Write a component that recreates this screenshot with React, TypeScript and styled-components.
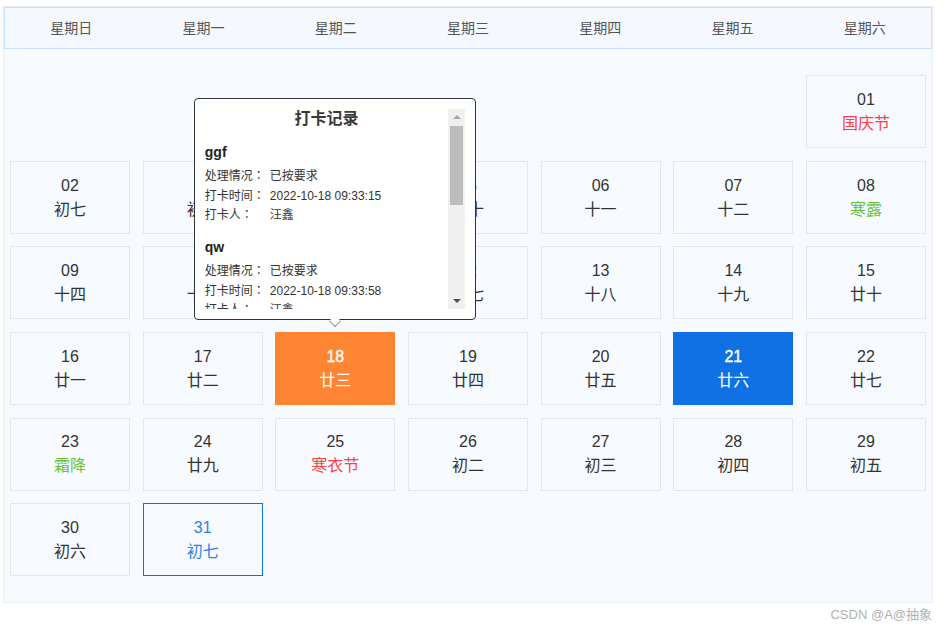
import React from "react";
import styled, { createGlobalStyle } from "styled-components";

const Global = createGlobalStyle`
  html, body { margin: 0; padding: 0; background: #fff; }
  body { font-family: "Liberation Sans", "Noto Sans CJK SC", sans-serif; }
`;

const Page = styled.div`
  width: 947px;
  height: 630px;
  padding: 6px 14px 0 3px;
  box-sizing: border-box;
  overflow: hidden;
`;

const Calendar = styled.div`
  width: 930px;
  height: 597px;
  box-sizing: border-box;
  background: #f7faff;
  border: 1px solid #eceff3;
`;

const WeekHeader = styled.div`
  display: grid;
  grid-template-columns: repeat(7, 1fr);
  height: 42px;
  width: 928px;
  padding-bottom: 2px;
  box-sizing: border-box;
  background: #f5f9ff;
  border: 1px solid #c6e1ff;
`;

const WeekDay = styled.div`
  display: flex;
  align-items: center;
  justify-content: center;
  font-size: 14px;
  color: #555;
`;

const Days = styled.div`
  display: grid;
  grid-template-columns: repeat(7, 132.67px);
  grid-auto-rows: 85.6px;
  padding-top: 20.2px;
`;

const Slot = styled.div<{ $start?: number }>`
  position: relative;
  padding: 6px 0 0 6px;
  box-sizing: border-box;
  ${(p) => (p.$start ? `grid-column-start: ${p.$start};` : "")}
`;

type Tone = "plain" | "today" | "active" | "selected";

const cellBg: Record<Tone, string> = {
  plain: "transparent",
  today: "transparent",
  active: "#1071e5",
  selected: "#ff8533",
};
const cellBorder: Record<Tone, string> = {
  plain: "#e2e7ed",
  today: "#1071e5",
  active: "#1071e5",
  selected: "#ff8533",
};
const cellText: Record<Tone, string> = {
  plain: "#333",
  today: "#2a82e6",
  active: "#fff",
  selected: "#fff",
};

const Cell = styled.div<{ $tone: Tone }>`
  width: 120px;
  height: 73px;
  box-sizing: border-box;
  padding-top: 11.8px;
  text-align: center;
  font-size: 16px;
  line-height: 24px;
  background: ${(p) => cellBg[p.$tone]};
  border: 1px solid ${(p) => cellBorder[p.$tone]};
  color: ${(p) => cellText[p.$tone]};
`;

const Num = styled.div<{ $strong?: boolean }>`
  ${(p) => (p.$strong ? "-webkit-text-stroke: 0.35px currentColor;" : "")}
`;

const Lunar = styled.div<{ $kind?: "fest" | "term" }>`
  color: ${(p) => (p.$kind === "fest" ? "#ff4045" : p.$kind === "term" ? "#67c23a" : "inherit")};
`;

const Popover = styled.div`
  position: absolute;
  z-index: 5;
  left: 66px;
  bottom: calc(100% - 6px + 12px);
  transform: translateX(-50%);
  width: 282px;
  height: 222px;
  box-sizing: border-box;
  padding: 10px 10px 10px 9.5px;
  display: flex;
  background: #fff;
  border: 1px solid #2f3338;
  border-radius: 4px;
`;

const Arrow = styled.span`
  position: absolute;
  left: 50%;
  bottom: -7px;
  width: 9px;
  height: 9px;
  margin-left: -5px;
  background: #fff;
  border-right: 1px solid #777;
  border-bottom: 1px solid #777;
  transform: rotate(45deg) scale(0.85);
`;

const PopBody = styled.div`
  flex: 1;
  min-width: 0;
  overflow: hidden;
  color: #333;
`;

const PopTitle = styled.div`
  font-size: 16px;
  font-weight: 700;
  line-height: 20px;
  text-align: center;
  color: #3a3a3a;
  margin-bottom: 14px;
`;

const Record = styled.div`
  margin-bottom: 12.8px;
`;

const Who = styled.div`
  font-size: 14px;
  font-weight: 700;
  line-height: 18px;
  color: #222;
  margin-bottom: 6.2px;
`;

const Line = styled.div`
  display: flex;
  height: 19.4px;
  font-size: 12px;
  line-height: 19.4px;
`;

const Label = styled.span`
  width: 65px;
  flex: none;
`;

const Colon = styled.span`
  font-family: "Noto Sans CJK TC", sans-serif;
  line-height: 0;
`;

const Track = styled.div`
  width: 17px;
  flex: none;
  height: 200px;
  background: #f0f0f0;
  position: relative;
  display: flex;
  flex-direction: column;
  align-items: center;
`;

const ArrowGlyph = styled.span<{ $up?: boolean }>`
  position: absolute;
  ${(p) => (p.$up ? "top: 6px;" : "bottom: 6px;")}
  left: 50%;
  margin-left: -4px;
  width: 0;
  height: 0;
  border-left: 4px solid transparent;
  border-right: 4px solid transparent;
  ${(p) =>
    p.$up
      ? `border-bottom: 4px solid #a8a8a8;`
      : `border-top: 4px solid #505050;`}
`;

const Thumb = styled.div`
  margin-top: 17px;
  width: 13px;
  height: 79px;
  background: #bdbdbd;
`;

const Watermark = styled.div`
  width: 929px;
  margin-top: 3px;
  text-align: right;
  font-size: 13px;
  line-height: 18px;
  color: #b2b2b2;
`;

type Day = { d: string; l: string; kind?: "fest" | "term"; tone?: Tone };

const days: Day[] = [
  { d: "01", l: "国庆节", kind: "fest" },
  { d: "02", l: "初七" },
  { d: "03", l: "初八" },
  { d: "04", l: "初九" },
  { d: "05", l: "初十" },
  { d: "06", l: "十一" },
  { d: "07", l: "十二" },
  { d: "08", l: "寒露", kind: "term" },
  { d: "09", l: "十四" },
  { d: "10", l: "十五" },
  { d: "11", l: "十六" },
  { d: "12", l: "十七" },
  { d: "13", l: "十八" },
  { d: "14", l: "十九" },
  { d: "15", l: "廿十" },
  { d: "16", l: "廿一" },
  { d: "17", l: "廿二" },
  { d: "18", l: "廿三", tone: "selected" },
  { d: "19", l: "廿四" },
  { d: "20", l: "廿五" },
  { d: "21", l: "廿六", tone: "active" },
  { d: "22", l: "廿七" },
  { d: "23", l: "霜降", kind: "term" },
  { d: "24", l: "廿九" },
  { d: "25", l: "寒衣节", kind: "fest" },
  { d: "26", l: "初二" },
  { d: "27", l: "初三" },
  { d: "28", l: "初四" },
  { d: "29", l: "初五" },
  { d: "30", l: "初六" },
  { d: "31", l: "初七", tone: "today" },
];

const records = [
  { who: "ggf", time: "2022-10-18 09:33:15" },
  { who: "qw", time: "2022-10-18 09:33:58" },
];

const weeks = ["星期日", "星期一", "星期二", "星期三", "星期四", "星期五", "星期六"];

export default function App() {
  return (
    <Page>
      <Global />
      <Calendar>
        <WeekHeader>
          {weeks.map((w) => (
            <WeekDay key={w}>{w}</WeekDay>
          ))}
        </WeekHeader>
        <Days>
          {days.map((day, i) => (
            <Slot key={day.d} $start={i === 0 ? 7 : undefined}>
              <Cell $tone={day.tone ?? "plain"}>
                <Num $strong={day.tone === "selected" || day.tone === "active"}>{day.d}</Num>
                <Lunar $kind={day.kind}>{day.l}</Lunar>
              </Cell>
              {day.d === "18" && (
                <Popover>
                  <PopBody>
                    <PopTitle>打卡记录</PopTitle>
                    {records.map((r) => (
                      <Record key={r.who}>
                        <Who>{r.who}</Who>
                        <Line>
                          <Label>处理情况<Colon>：</Colon></Label>
                          <span>已按要求</span>
                        </Line>
                        <Line>
                          <Label>打卡时间<Colon>：</Colon></Label>
                          <span>{r.time}</span>
                        </Line>
                        <Line>
                          <Label>打卡人<Colon>：</Colon></Label>
                          <span>汪鑫</span>
                        </Line>
                      </Record>
                    ))}
                  </PopBody>
                  <Track>
                    <ArrowGlyph $up />
                    <Thumb />
                    <ArrowGlyph />
                  </Track>
                  <Arrow />
                </Popover>
              )}
            </Slot>
          ))}
        </Days>
      </Calendar>
      <Watermark>CSDN @A@抽象</Watermark>
    </Page>
  );
}
